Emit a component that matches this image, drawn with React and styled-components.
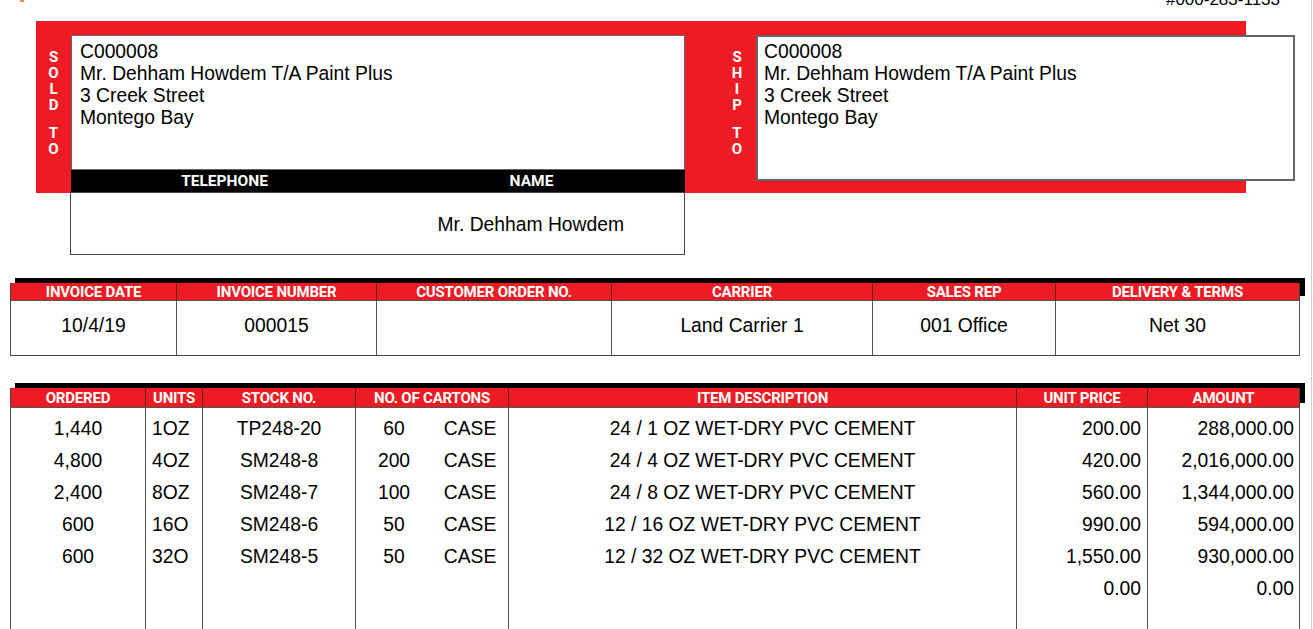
import React from 'react';
import styled, { createGlobalStyle } from 'styled-components';

const RED = '#ed1c24';

const GlobalStyle = createGlobalStyle`
  html, body {
    margin: 0;
    padding: 0;
    background: #fff;
  }
  body {
    font-family: 'Liberation Sans', Arial, sans-serif;
    color: #000;
  }
`;

const Page = styled.div`
  width: 1311px;
  min-height: 100vh;
  border-right: 1px solid #d0d0d0;
  overflow: hidden;
`;

const TopBar = styled.div`
  height: 21px;
  display: flex;
  justify-content: space-between;
  align-items: flex-start;
  padding: 0 31px 0 20px;
`;

const LogoTip = styled.span`
  width: 4px;
  height: 2px;
  background: #f58a4a;
`;

const PhoneNo = styled.span`
  margin-top: -10px;
  font-size: 17px;
  line-height: 20px;
`;

const Band = styled.div`
  margin-left: 36px;
  width: 1210px;
  height: 172px;
  background: ${RED};
  display: flex;
  padding-top: 14px;
  box-sizing: border-box;
`;

const SideLabel = styled.div`
  width: ${(p) => p.$width}px;
  flex-shrink: 0;
  display: flex;
  flex-direction: column;
  align-items: ${(p) => (p.$end ? 'flex-end' : 'center')};
  padding-top: 14px;
  padding-right: ${(p) => (p.$end ? 14 : 0)}px;
  box-sizing: border-box;
`;

const LabelLetters = styled.div`
  display: flex;
  flex-direction: column;
  align-items: center;
  width: 10px;
`;

const Letter = styled.span`
  font-family: Roboto, 'Open Sans', sans-serif;
  font-weight: 700;
  font-size: 15px;
  line-height: 16px;
  height: ${(p) => (p.$gap ? 12 : 16)}px;
  color: #fff;
`;

const SoldBlock = styled.div`
  width: 614px;
  flex-shrink: 0;
  display: flex;
  flex-direction: column;
`;

const AddressBox = styled.div`
  background: #fff;
  border: ${(p) => (p.$thick ? '2px solid #666' : '1px solid #666')};
  box-sizing: border-box;
  height: ${(p) => p.$height}px;
  width: ${(p) => p.$width || 614}px;
  flex-shrink: 0;
  padding: ${(p) => (p.$thick ? '4px 6px' : '5px 8px')};
  font-size: 19.3px;
  line-height: 22px;
`;

const BlackBar = styled.div`
  height: 22px;
  background: #000;
  display: grid;
  grid-template-columns: 1fr 1fr;
  align-items: center;
`;

const BarTitle = styled.span`
  text-align: center;
  color: #fff;
  font-family: Roboto, 'Open Sans', sans-serif;
  font-weight: 700;
  font-size: 15.5px;
`;

const ContactBox = styled.div`
  margin: -1px 0 0 70px;
  width: 615px;
  height: 63px;
  box-sizing: border-box;
  border: 1px solid #444;
  display: grid;
  grid-template-columns: 1fr 1fr;
  align-items: center;
  font-size: 19.3px;
`;

const ContactValue = styled.span`
  text-align: center;
  padding-top: 2px;
`;

const Table = styled.div`
  margin: ${(p) => p.$top}px 0 0 10px;
  width: 1290px;
`;

const HeadRow = styled.div`
  display: grid;
  grid-template-columns: ${(p) => p.$cols};
  background: ${RED};
  height: ${(p) => p.$height}px;
  box-shadow: 5px -5px 0 #000;
  border-bottom: 1px solid #555;
  box-sizing: border-box;
`;

const HeadCell = styled.div`
  display: flex;
  align-items: center;
  justify-content: center;
  color: #fff;
  font-family: Roboto, 'Open Sans', sans-serif;
  font-weight: 700;
  font-size: 15px;
  letter-spacing: -0.2px;
  white-space: nowrap;
  border-left: 1px solid #6b2020;
  &:first-child {
    border-left: 1px solid #444;
  }
  &:last-child {
    border-right: 1px solid #444;
  }
`;

const Body = styled.div`
  display: grid;
  grid-template-columns: ${(p) => p.$cols};
  border-bottom: ${(p) => (p.$closed ? '1px solid #444' : 'none')};
`;

const InfoCell = styled.div`
  height: 54px;
  display: flex;
  align-items: center;
  justify-content: center;
  padding-bottom: 4px;
  box-sizing: border-box;
  font-size: 19.3px;
  border-left: 1px solid #555;
  &:last-child {
    border-right: 1px solid #555;
  }
`;

const ItemCell = styled.div`
  height: 32px;
  line-height: 32px;
  font-size: 19.3px;
  text-align: ${(p) => p.$align || 'center'};
  padding: ${(p) => (p.$align === 'left' ? '0 0 0 6px' : p.$align === 'right' ? `0 ${p.$pad || 6}px 0 0` : '0')};
  border-left: 1px solid #555;
  border-right: ${(p) => (p.$last ? '1px solid #555' : 'none')};
  white-space: nowrap;
  overflow: hidden;
`;

const Spacer = styled.div`
  grid-column: 1 / -1;
  display: grid;
  grid-template-columns: ${(p) => p.$cols};
  height: 5px;
`;

const SpacerCell = styled.div`
  border-left: 1px solid #555;
  &:last-child {
    border-right: 1px solid #555;
  }
`;

const Cartons = styled.div`
  display: grid;
  grid-template-columns: 1fr 1fr;
  border-left: 1px solid #555;
  height: 32px;
  line-height: 32px;
  font-size: 19.3px;
  text-align: center;
`;

const VerticalLabel = ({ text }) => (
  <LabelLetters>
    {text.split('').map((c, i) =>
      c === ' ' ? <Letter key={i} $gap /> : <Letter key={i}>{c}</Letter>
    )}
  </LabelLetters>
);

const address = ['C000008', 'Mr. Dehham Howdem T/A Paint Plus', '3 Creek Street', 'Montego Bay'];

const infoCols = '166px 200px 235px 261px 183px 245px';
const infoHeads = ['INVOICE DATE', 'INVOICE NUMBER', 'CUSTOMER ORDER NO.', 'CARRIER', 'SALES REP', 'DELIVERY & TERMS'];
const infoVals = ['10/4/19', '000015', '', 'Land Carrier 1', '001 Office', 'Net 30'];

const itemCols = '135px 57px 153px 153px 508px 131px 153px';
const itemHeads = ['ORDERED', 'UNITS', 'STOCK NO.', 'NO. OF CARTONS', 'ITEM DESCRIPTION', 'UNIT PRICE', 'AMOUNT'];
const items = [
  ['1,440', '1OZ', 'TP248-20', '60', 'CASE', '24 / 1 OZ WET-DRY PVC CEMENT', '200.00', '288,000.00'],
  ['4,800', '4OZ', 'SM248-8', '200', 'CASE', '24 / 4 OZ WET-DRY PVC CEMENT', '420.00', '2,016,000.00'],
  ['2,400', '8OZ', 'SM248-7', '100', 'CASE', '24 / 8 OZ WET-DRY PVC CEMENT', '560.00', '1,344,000.00'],
  ['600', '16O', 'SM248-6', '50', 'CASE', '12 / 16 OZ WET-DRY PVC CEMENT', '990.00', '594,000.00'],
  ['600', '32O', 'SM248-5', '50', 'CASE', '12 / 32 OZ WET-DRY PVC CEMENT', '1,550.00', '930,000.00'],
  ['', '', '', '', '', '', '0.00', '0.00'],
  ['', '', '', '', '', '', '', ''],
  ['', '', '', '', '', '', '', ''],
];

export default function App() {
  return (
    <>
      <GlobalStyle />
      <Page>
        <TopBar>
          <LogoTip />
          <PhoneNo>#000-283-1133</PhoneNo>
        </TopBar>

        <Band>
          <SideLabel $width={35}>
            <VerticalLabel text="SOLD TO" />
          </SideLabel>
          <SoldBlock>
            <AddressBox $height={135}>
              {address.map((l) => (
                <div key={l}>{l}</div>
              ))}
            </AddressBox>
            <BlackBar>
              <BarTitle>TELEPHONE</BarTitle>
              <BarTitle>NAME</BarTitle>
            </BlackBar>
          </SoldBlock>
          <SideLabel $width={71} $end>
            <VerticalLabel text="SHIP TO" />
          </SideLabel>
          <AddressBox $thick $height={146} $width={539}>
            {address.map((l) => (
              <div key={l}>{l}</div>
            ))}
          </AddressBox>
        </Band>

        <ContactBox>
          <ContactValue />
          <ContactValue>Mr. Dehham Howdem</ContactValue>
        </ContactBox>

        <Table $top={28}>
          <HeadRow $cols={infoCols} $height={18}>
            {infoHeads.map((h) => (
              <HeadCell key={h}>{h}</HeadCell>
            ))}
          </HeadRow>
          <Body $cols={infoCols} $closed>
            {infoVals.map((v, i) => (
              <InfoCell key={i}>{v}</InfoCell>
            ))}
          </Body>
        </Table>

        <Table $top={32}>
          <HeadRow $cols={itemCols} $height={20}>
            {itemHeads.map((h) => (
              <HeadCell key={h}>{h}</HeadCell>
            ))}
          </HeadRow>
          <Body $cols={itemCols}>
            <Spacer $cols={itemCols}>
              {itemHeads.map((h) => (
                <SpacerCell key={h} />
              ))}
            </Spacer>
            {items.map((r, i) => (
              <React.Fragment key={i}>
                <ItemCell>{r[0]}</ItemCell>
                <ItemCell $align="left">{r[1]}</ItemCell>
                <ItemCell>{r[2]}</ItemCell>
                <Cartons>
                  <span>{r[3]}</span>
                  <span>{r[4]}</span>
                </Cartons>
                <ItemCell>{r[5]}</ItemCell>
                <ItemCell $align="right">{r[6]}</ItemCell>
                <ItemCell $align="right" $pad={5} $last>
                  {r[7]}
                </ItemCell>
              </React.Fragment>
            ))}
          </Body>
        </Table>
      </Page>
    </>
  );
}
